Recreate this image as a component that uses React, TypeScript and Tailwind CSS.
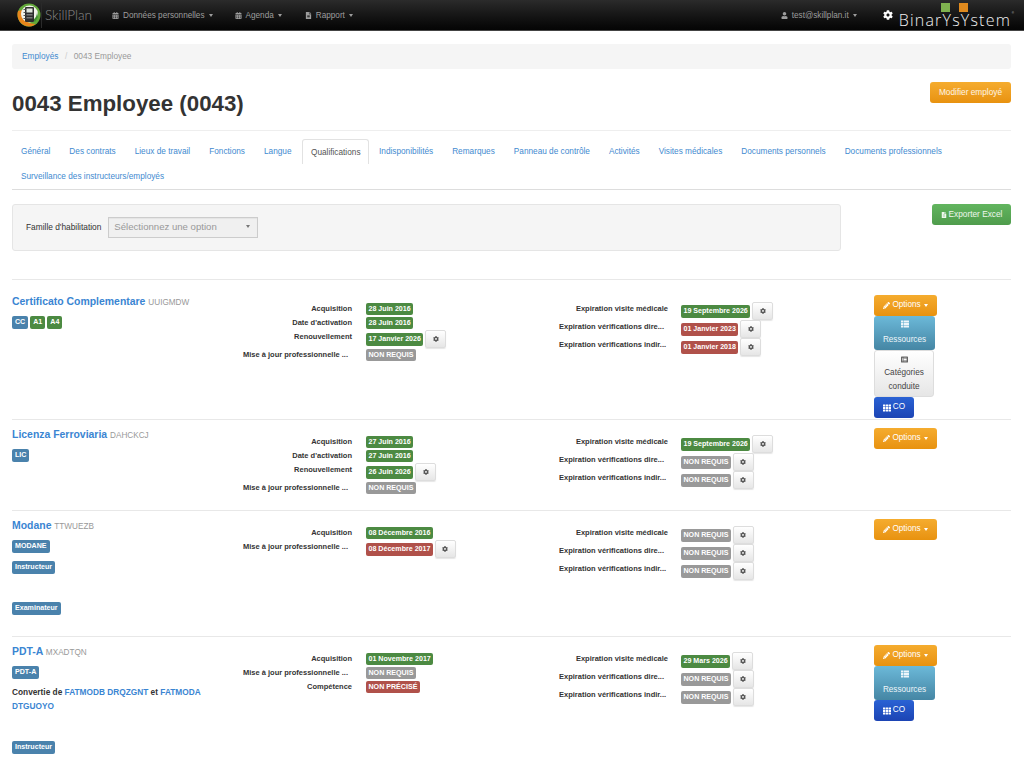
import type { ReactNode } from "react";
import { FaCalendarAlt, FaCog, FaFileAlt, FaListAlt, FaPencilAlt, FaTh, FaThList, FaUser } from "react-icons/fa";

const tabs = [
  "Général", "Des contrats", "Lieux de travail", "Fonctions", "Langue", "Qualifications", "Indisponibilités", "Remarques",
  "Panneau de contrôle", "Activités", "Visites médicales", "Documents personnels", "Documents professionnels",
  "Surveillance des instructeurs/employés",
];

type Tone = "green" | "red" | "gray";
type Field = { label: string; value: string; tone: Tone; cog?: boolean };

const toneClass: Record<Tone, string> = {
  green: "bg-[#4c8a42]",
  red: "bg-[#b0514a]",
  gray: "bg-[#999999]",
};

function Caret({ className = "" }: { className?: string }) {
  return <span className={`inline-block border-x-[2.5px] border-t-[3px] border-x-transparent border-t-current ${className}`} />;
}

function NavItem({ icon, label, className }: { icon: ReactNode; label: string; className: string }) {
  return (
    <div className={`mt-[2px] flex items-center gap-[4px] text-[8.2px] text-[#9d9d9d] ${className}`}>
      {icon}
      <span>{label}</span>
      <Caret />
    </div>
  );
}

function Logo() {
  return (
    <svg width="24" height="24" viewBox="0 0 24 24" className="shrink-0">
      <circle cx="12" cy="12" r="11.5" fill="#62a83a" />
      <path d="M1 8 C-1 15 3 23 12 23.5 C15 23.5 17 22.5 18.5 21 C12 21 5 17 5 7 Z" fill="#e8861c" />
      <circle cx="12.5" cy="11" r="8.5" fill="#f2f2ea" />
      <path d="M16 17 C19 15 20 12 20 9 L21 14 L18 19 Z" fill="#3f8f2e" />
      <rect x="8" y="4" width="9" height="15" rx="1" fill="#2e2e2e" />
      <rect x="9.5" y="5.5" width="6" height="4" fill="#dfe5dc" />
      <rect x="9.5" y="11" width="6" height="1.5" fill="#777" />
      <rect x="9.5" y="14" width="6" height="1.5" fill="#777" />
      <rect x="6.5" y="6" width="2" height="1" fill="#555" />
      <rect x="6.5" y="9" width="2" height="1" fill="#555" />
      <rect x="6.5" y="12" width="2" height="1" fill="#555" />
      <rect x="6.5" y="15" width="2" height="1" fill="#555" />
    </svg>
  );
}

function Navbar() {
  return (
    <header className="flex h-[31px] items-center bg-gradient-to-b from-[#2b2b2b] to-[#050505] border-b border-[#444]">
      <div className="ml-[17px] flex h-full items-center">
        <Logo />
        <div className="h-[25px] w-px bg-[#2a2a2a]" />
        <span className="ml-[3px] mt-[1px] text-[13.5px] font-light text-[#8a8a8a] [font-family:'Lato',sans-serif]">SkillPlan</span>
      </div>
      <NavItem className="ml-[20px]" icon={<FaCalendarAlt className="h-[7px] w-[7px]" />} label="Données personnelles" />
      <NavItem className="ml-[22px]" icon={<FaCalendarAlt className="h-[7px] w-[7px]" />} label="Agenda" />
      <NavItem className="ml-[23px]" icon={<FaFileAlt className="h-[7px] w-[7px]" />} label="Rapport" />
      <NavItem className="ml-auto" icon={<FaUser className="h-[7px] w-[7px]" />} label="test@skillplan.it" />
      <div className="relative ml-[26px] mr-[13px] flex h-full items-center">
        <FaCog className="mb-[1px] h-[10px] w-[10px] text-white" />
        <span className="ml-[6px] mt-[9px] text-[16px] leading-none font-light tracking-[1.2px] text-[#f0f0f0] [font-family:'Open_Sans',sans-serif]">BinarYsYstem</span>
        <span className="absolute left-[58px] top-[3px] h-[9px] w-[9px] bg-[#7fb24f]" />
        <span className="absolute left-[76px] top-[3px] h-[9px] w-[9px] bg-[#df8a1e]" />
        <span className="absolute -right-[3px] top-[12px] text-[3px] leading-none text-[#ccc]">®</span>
      </div>
    </header>
  );
}

function Tabs() {
  return (
    <nav className="mt-[8px] flex flex-wrap border-b border-[#dddddd] text-[8.25px] text-[#3f8ad0]">
      {tabs.map((t) => (
        <span
          key={t}
          className={
            t === "Qualifications"
              ? "relative -mb-px mx-[1px] flex h-[25px] items-center rounded-t-[3px] border border-b-0 border-[#e2e2e2] bg-white px-[7.5px] pt-[2px] text-[#555]"
              : "flex h-[25px] items-center pl-[9px] pr-[10px] pt-[2px]"
          }
        >
          {t}
        </span>
      ))}
    </nav>
  );
}

function Tag({ children, color = "bg-[#4a82ac]" }: { children: ReactNode; color?: string }) {
  return <span className={`block h-[13px] rounded-[2px] px-[3px] text-[7.1px] leading-[13px] font-bold text-white ${color}`}>{children}</span>;
}

function FieldList({ fields, labelClass }: { fields: Field[]; labelClass: string }) {
  return (
    <div className="flex flex-col">
      {fields.map((f) => (
        <div key={f.label} className={`flex items-start ${f.cog ? "h-[18px]" : "h-[14px]"}`}>
          <span className={`whitespace-nowrap text-[7.5px] leading-[14px] font-bold text-[#333] ${f.label.endsWith("...") ? "text-left" : "text-right"} ${labelClass}`}>{f.label}</span>
          <div className="flex items-start gap-[2px]">
            <span className={`rounded-[2px] px-[2.5px] text-[7.1px] font-bold whitespace-nowrap text-white ${f.cog ? "mt-[2.5px] h-[13px] leading-[13px]" : "mt-[1px] h-[12px] leading-[12px]"} ${toneClass[f.tone]}`}>{f.value}</span>
            {f.cog && (
              <span className="flex h-[18px] w-[21px] items-center justify-center rounded-[2px] border border-[#ddd] bg-gradient-to-b from-white to-[#e6e6e6] shadow-[0_1px_1px_rgba(0,0,0,0.1)]">
                <FaCog className="h-[6px] w-[6px] text-[#555]" />
              </span>
            )}
          </div>
        </div>
      ))}
    </div>
  );
}

function Actions({ ressources, categories, co }: { ressources?: boolean; categories?: boolean; co?: boolean }) {
  return (
    <div className="flex flex-col items-start text-[8.2px]">
      <span className="flex h-[21px] w-[63px] items-center justify-center gap-[2px] rounded-[3px] bg-gradient-to-b from-[#f5ac2e] to-[#e8920e] text-white">
        <FaPencilAlt className="h-[7px] w-[7px]" />
        Options
        <Caret className="ml-[1px]" />
      </span>
      {ressources && (
        <span className="flex h-[34px] w-[61px] flex-col items-center justify-center gap-[6px] rounded-[3px] bg-gradient-to-b from-[#6cb9d9] to-[#4586a4] text-[#eef6fa]">
          <FaThList className="h-[8px] w-[8px]" />
          Ressources
        </span>
      )}
      {categories && (
        <span className="flex h-[47px] w-[60px] flex-col items-center justify-start gap-[3px] rounded-[3px] border border-[#ddd] bg-gradient-to-b from-white to-[#e6e6e6] pt-[5px] leading-[14px] text-[#444]">
          <FaListAlt className="h-[7px] w-[7px] text-[#666]" />
          <span className="text-center">Catégories conduite</span>
        </span>
      )}
      {co && (
        <span className="flex h-[21px] w-[40px] items-center justify-center gap-[2px] rounded-[3px] bg-gradient-to-b from-[#2a62d4] to-[#1c44b4] text-white">
          <FaTh className="h-[8px] w-[8px]" />
          CO
        </span>
      )}
    </div>
  );
}

function Qualification({
  name, code, top, height, left, fields, expiry, actions, last,
}: {
  name: string; code: string; top: string; height: string; left: ReactNode; fields: Field[]; expiry: Field[]; actions: ReactNode; last?: boolean;
}) {
  return (
    <section className={`flex ${last ? "" : "border-b border-[#e8e8e8]"} ${top} ${height}`}>
      <div className="w-[228px] shrink-0">
        <p className="text-[10.45px] leading-[13px] font-bold text-[#3a85d2]">
          {name} <span className="text-[8.2px] font-normal text-[#999]">{code}</span>
        </p>
        {left}
      </div>
      <div className="ml-[3px] mt-[7px] w-[316px] shrink-0">
        <FieldList fields={fields} labelClass="w-[109px] mr-[14px]" />
      </div>
      <div className="mt-[7px] w-[315px] shrink-0">
        <FieldList fields={expiry} labelClass="w-[109px] mr-[13px]" />
      </div>
      {actions}
    </section>
  );
}

const nonRequis = "NON REQUIS";

export default function App() {
  return (
    <div className="h-screen overflow-hidden bg-white text-[#333] [font-family:'Liberation_Sans',Arial,sans-serif]">
      <Navbar />
      <main className="pl-[12px] pr-[13px]">
        <div className="mt-[13px] flex h-[25px] items-center gap-[6.5px] rounded-[3px] bg-[#f5f5f5] px-[10px] text-[8.3px] text-[#999]">
          <span className="text-[#3f8ad0]">Employés</span>
          <span className="text-[#ccc]">/</span>
          <span>0043 Employee</span>
        </div>

        <div className="flex h-[62px] items-start justify-between border-b border-[#eeeeee]">
          <h1 className="mt-[22px] text-[22.3px] leading-[26px] font-bold text-[#333]">0043 Employee (0043)</h1>
          <span className="mt-[13px] flex h-[21px] w-[81px] items-center justify-center rounded-[3px] bg-gradient-to-b from-[#f5ac2e] to-[#e8920e] text-[8.3px] text-white/90">Modifier employé</span>
        </div>

        <Tabs />

        <div className="mt-[14px] flex items-start justify-between">
          <div className="flex h-[47px] w-[829px] items-center rounded-[3px] border border-[#e5e5e5] bg-[#f5f5f5] pl-[13px]">
            <span className="text-[8.35px] text-[#333]">Famille d'habilitation</span>
            <div className="ml-[7px] flex h-[21px] w-[150px] items-center justify-between border border-[#ccc] bg-[#f0f0f0] pl-[5px] pr-[7px] text-[9.6px] text-[#999] shadow-[inset_0_1px_1px_rgba(0,0,0,0.05)]">
              Sélectionnez une option
              <span className="mb-[2px] border-x-[2.5px] border-t-[3px] border-x-transparent border-t-[#777]" />
            </div>
          </div>
          <span className="flex h-[21px] w-[79px] items-center justify-center gap-[2px] rounded-[3px] bg-gradient-to-b from-[#62b55f] to-[#4f9c4c] text-[8.3px] text-white/90">
            <FaFileAlt className="h-[6px] w-[6px]" />
            Exporter Excel
          </span>
        </div>

        <div className="mt-[28px] border-b border-[#e8e8e8]" />

        <Qualification
          name="Certificato Complementare"
          code="UUIGMDW"
          top="pt-[15px]"
          height="h-[140px]"
          left={
            <div className="mt-[7px] flex gap-[2px]">
              <Tag>CC</Tag>
              <Tag color="bg-[#4c8a42]">A1</Tag>
              <Tag color="bg-[#4c8a42]">A4</Tag>
            </div>
          }
          fields={[
            { label: "Acquisition", value: "28 Juin 2016", tone: "green" },
            { label: "Date d'activation", value: "28 Juin 2016", tone: "green" },
            { label: "Renouvellement", value: "17 Janvier 2026", tone: "green", cog: true },
            { label: "Mise à jour professionnelle ...", value: nonRequis, tone: "gray" },
          ]}
          expiry={[
            { label: "Expiration visite médicale", value: "19 Septembre 2026", tone: "green", cog: true },
            { label: "Expiration vérifications dire...", value: "01 Janvier 2023", tone: "red", cog: true },
            { label: "Expiration vérifications indir...", value: "01 Janvier 2018", tone: "red", cog: true },
          ]}
          actions={<Actions ressources categories co />}
        />

        <Qualification
          name="Licenza Ferroviaria"
          code="DAHCKCJ"
          top="pt-[8px]"
          height="h-[91px]"
          left={
            <div className="mt-[7px] flex gap-[2px]">
              <Tag>LIC</Tag>
            </div>
          }
          fields={[
            { label: "Acquisition", value: "27 Juin 2016", tone: "green" },
            { label: "Date d'activation", value: "27 Juin 2016", tone: "green" },
            { label: "Renouvellement", value: "26 Juin 2026", tone: "green", cog: true },
            { label: "Mise à jour professionnelle ...", value: nonRequis, tone: "gray" },
          ]}
          expiry={[
            { label: "Expiration visite médicale", value: "19 Septembre 2026", tone: "green", cog: true },
            { label: "Expiration vérifications dire...", value: nonRequis, tone: "gray", cog: true },
            { label: "Expiration vérifications indir...", value: nonRequis, tone: "gray", cog: true },
          ]}
          actions={<Actions />}
        />

        <Qualification
          name="Modane"
          code="TTWUEZB"
          top="pt-[8px]"
          height="h-[126px]"
          left={
            <div className="mt-[7px] flex flex-col items-start">
              <Tag>MODANE</Tag>
              <div className="mt-[8px]"><Tag>Instructeur</Tag></div>
              <div className="mt-[28px]"><Tag>Examinateur</Tag></div>
            </div>
          }
          fields={[
            { label: "Acquisition", value: "08 Décembre 2016", tone: "green" },
            { label: "Mise à jour professionnelle ...", value: "08 Décembre 2017", tone: "red", cog: true },
          ]}
          expiry={[
            { label: "Expiration visite médicale", value: nonRequis, tone: "gray", cog: true },
            { label: "Expiration vérifications dire...", value: nonRequis, tone: "gray", cog: true },
            { label: "Expiration vérifications indir...", value: nonRequis, tone: "gray", cog: true },
          ]}
          actions={<Actions />}
        />

        <Qualification
          last
          name="PDT-A"
          code="MXADTQN"
          top="pt-[8px]"
          height="h-[131px]"
          left={
            <div className="mt-[7px] flex flex-col items-start">
              <Tag>PDT-A</Tag>
              <p className="mt-[7px] w-[205px] text-[8.3px] leading-[13.5px] font-bold text-[#333]">
                Convertie de <span className="text-[#3a85d2]">FATMODB</span> <span className="text-[#3a85d2]">DRQZGNT</span> et <span className="text-[#3a85d2]">FATMODA</span> <span className="text-[#3a85d2]">DTGUOYO</span>
              </p>
              <div className="mt-[28px]"><Tag>Instructeur</Tag></div>
            </div>
          }
          fields={[
            { label: "Acquisition", value: "01 Novembre 2017", tone: "green" },
            { label: "Mise à jour professionnelle ...", value: nonRequis, tone: "gray" },
            { label: "Compétence", value: "NON PRÉCISÉ", tone: "red" },
          ]}
          expiry={[
            { label: "Expiration visite médicale", value: "29 Mars 2026", tone: "green", cog: true },
            { label: "Expiration vérifications dire...", value: nonRequis, tone: "gray", cog: true },
            { label: "Expiration vérifications indir...", value: nonRequis, tone: "gray", cog: true },
          ]}
          actions={<Actions ressources co />}
        />
      </main>
    </div>
  );
}
